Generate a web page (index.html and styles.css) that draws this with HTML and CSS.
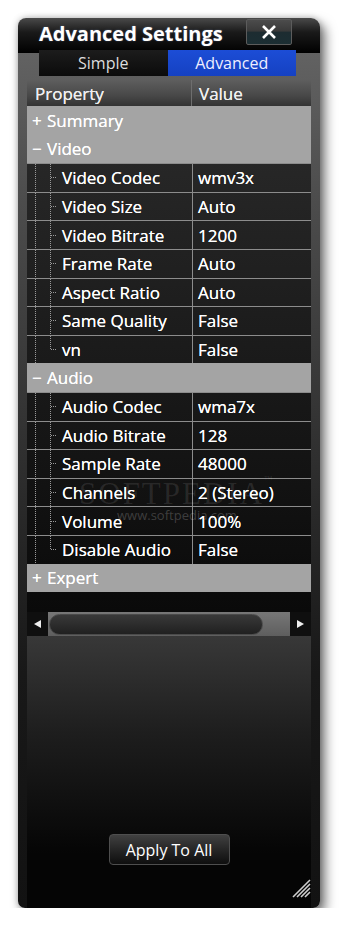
FILE: index.html
```html
<!DOCTYPE html>
<html>
<head>
	<meta charset="utf-8">
	<title>Advanced Settings</title>
	<link rel="stylesheet" href="styles.css">
</head>
<body>
	<div class="window">
		<div class="titlebar">
			<span class="titlebar__txt">Advanced Settings</span>
			<span class="close">
				<svg width="16" height="14" viewBox="0 0 16 14"><path d="M2 1 L14 13 M14 1 L2 13" stroke="#fff" stroke-width="2.6" fill="none"/></svg>
			</span>
		</div>

		<div class="body">
			<div class="tabs">
				<span class="tab">Simple</span>
				<span class="tab tab_active">Advanced</span>
			</div>

			<div class="grid">
				<div class="grid__head">
					<span class="grid__hname">Property</span>
					<span class="grid__hval">Value</span>
				</div>

				<div class="grid__cat"><span class="grid__sign">+</span>Summary</div>
				<div class="grid__cat"><span class="grid__sign">&minus;</span>Video</div>
				<div class="grid__row"><span class="grid__name">Video Codec</span><span class="grid__val">wmv3x</span></div>
				<div class="grid__row"><span class="grid__name">Video Size</span><span class="grid__val">Auto</span></div>
				<div class="grid__row"><span class="grid__name">Video Bitrate</span><span class="grid__val">1200</span></div>
				<div class="grid__row"><span class="grid__name">Frame Rate</span><span class="grid__val">Auto</span></div>
				<div class="grid__row"><span class="grid__name">Aspect Ratio</span><span class="grid__val">Auto</span></div>
				<div class="grid__row"><span class="grid__name">Same Quality</span><span class="grid__val">False</span></div>
				<div class="grid__row grid__row_last"><span class="grid__name">vn</span><span class="grid__val">False</span></div>

				<div class="grid__cat"><span class="grid__sign">&minus;</span>Audio</div>
				<div class="grid__row"><span class="grid__name">Audio Codec</span><span class="grid__val">wma7x</span></div>
				<div class="grid__row"><span class="grid__name">Audio Bitrate</span><span class="grid__val">128</span></div>
				<div class="grid__row"><span class="grid__name">Sample Rate</span><span class="grid__val">48000</span></div>
				<div class="grid__row"><span class="grid__name">Channels</span><span class="grid__val">2 (Stereo)</span></div>
				<div class="grid__row"><span class="grid__name">Volume</span><span class="grid__val">100%</span></div>
				<div class="grid__row grid__row_last"><span class="grid__name">Disable Audio</span><span class="grid__val">False</span></div>

				<div class="grid__cat"><span class="grid__sign">+</span>Expert</div>

				<div class="watermark">
					<div class="watermark__big">SOFTPEDIA<sup>™</sup></div>
					<div class="watermark__url">www.softpedia.com</div>
				</div>
			</div>

			<div class="scroll">
				<span class="scroll__btn">
					<svg width="7" height="8" viewBox="0 0 7 8"><path d="M7 0 L0 4 L7 8 Z" fill="#eee"/></svg>
				</span>
				<span class="scroll__thumb"></span>
				<span class="scroll__track"></span>
				<span class="scroll__btn">
					<svg width="7" height="8" viewBox="0 0 7 8"><path d="M0 0 L7 4 L0 8 Z" fill="#eee"/></svg>
				</span>
			</div>

			<div class="footer">
				<span class="apply">Apply To All</span>
				<svg class="grip" width="19" height="19" viewBox="0 0 19 19">
					<path d="M1 18 L18 1 M5 18 L18 5 M9 18 L18 9 M13 18 L18 13" stroke="#cfcfcf" stroke-width="1.6" fill="none"/>
				</svg>
			</div>
		</div>
	</div>
</body>
</html>
```

FILE: styles.css
```css
body {
	margin: 0;
	background: #fff;
	font-family: "Open Sans", "Noto Sans", sans-serif;
}


.window {
	width: 302px;
	height: 890px;
	margin: 18px 0 0 18px;
	display: flex;
	flex-direction: column;
	overflow: hidden;
	border-radius: 8px 9px 7px 7px;
	box-shadow: 5px 6px 12px rgba(0,0,0,.55), 0 0 6px rgba(0,0,0,.25);
}

.titlebar {
	height: 35px;
	display: flex;
	align-items: center;
	justify-content: space-between;
	padding: 0 28px 0 21px;
	background: linear-gradient(#4a4a4a, #1a1a1a 40%, #000);
	flex-shrink: 0;
}
	.titlebar__txt {
		color: #fff;
		font-size: 20px;
		font-weight: 700;
		margin-top: -4px;
		text-shadow: 0 0 2px rgba(160,190,255,.35);
	}

	.close {
		width: 44px;
		height: 24px;
		margin-top: -8px;
		display: flex;
		align-items: center;
		justify-content: center;
		border: 1px solid #5c5c5c;
		border-radius: 2px;
		background: linear-gradient(#4c4c4c, #3a3a3a 45%, #1d2c31 52%, #1b2e33);
	}


.body {
	flex: 1;
	display: flex;
	flex-direction: column;
	padding: 0 9px;
	background: linear-gradient(#626262, #4c4c4c 150px, #2a2a2a 450px, #181818 620px, #121212);
}

.tabs {
	display: flex;
	height: 26px;
	margin: -3px 15px 4px 12px;
}
	.tab {
		flex: 1;
		display: flex;
		align-items: center;
		justify-content: center;
		color: #ddd;
		font-size: 16px;
		background: linear-gradient(#1c1c1c, #0b0b0b);
	}
	.tab_active {
		color: #eef;
		background: linear-gradient(#1c4dd6, #1541c2);
	}


.grid {
	position: relative;
	padding-bottom: 20px;
	background: linear-gradient(#2c2c2c, #0a0a0a);
	font-size: 17px;
	color: #fff;
	text-shadow: 0 0 .4px #fff;
}
	.grid__head {
		display: flex;
		height: 26px;
		align-items: center;
		color: #eee;
		background: linear-gradient(#5e5e5e, #484848 60%, #333);
	}
		.grid__hname {
			width: 165px;
			height: 100%;
			display: flex;
			align-items: center;
			padding-left: 8px;
			box-sizing: border-box;
			border-right: 1px solid #6e6e6e;
		}
		.grid__hval {
			padding-left: 7px;
		}

	.grid__cat {
		height: 28.6px;
		display: flex;
		align-items: center;
		padding-left: 5px;
		background: #a4a4a4;
	}
		.grid__sign {
			width: 15px;
		}

	.grid__row {
		display: flex;
		height: 28.6px;
		box-sizing: border-box;
		border-top: 1px solid #8c8c8c;
	}
		.grid__name {
			width: 165px;
			flex-shrink: 0;
			display: flex;
			align-items: center;
			padding-left: 35px;
			box-sizing: border-box;
			background:
				repeating-linear-gradient(to right, #9a9a9a 0 1px, transparent 1px 2px) 24px 50% / 6px 1px no-repeat,
				repeating-linear-gradient(#9a9a9a 0 1px, transparent 1px 2px) 23px 0 / 1px 100% no-repeat,
				repeating-linear-gradient(#9a9a9a 0 1px, transparent 1px 2px) 8px 0 / 1px 100% no-repeat;
		}
		.grid__row_last .grid__name {
			background-size: 6px 1px, 1px 50%, 1px 100%;
		}
		.grid__val {
			flex: 1;
			display: flex;
			align-items: center;
			padding-left: 5px;
			border-left: 1px solid #8c8c8c;
		}

	.watermark {
		position: absolute;
		left: 52px;
		top: 394px;
		text-align: center;
		pointer-events: none;
		text-shadow: none;
	}
		.watermark__big {
			font-family: "Liberation Serif", serif;
			font-size: 31px;
			letter-spacing: 2px;
			color: rgba(255,255,255,.1);
		}
			.watermark__big sup {
				font-size: 9px;
				vertical-align: 22px;
			}
		.watermark__url {
			margin-top: -6px;
			font-size: 13px;
			color: rgba(255,255,255,.2);
		}


.scroll {
	display: flex;
	height: 24px;
	flex-shrink: 0;
	background: linear-gradient(#777, #5e5e5e);
}
	.scroll__btn {
		width: 21px;
		display: flex;
		align-items: center;
		justify-content: center;
		background: #0f0f0f;
	}
	.scroll__thumb {
		width: 212px;
		margin: 2px 0 1px 1px;
		border: 1px solid #4a4a4a;
		border-radius: 11px;
		background: linear-gradient(#393939, #202020);
	}
	.scroll__track {
		flex: 1;
	}


.footer {
	flex: 1;
	display: flex;
	flex-direction: column;
	align-items: center;
	justify-content: flex-end;
	padding-bottom: 10px;
	background: linear-gradient(#383838, #1e1e1e 35%, #050505 80%);
}
	.apply {
		width: 121px;
		height: 31px;
		box-sizing: border-box;
		display: flex;
		align-items: center;
		justify-content: center;
		margin-bottom: 14px;
		border: 1px solid #4e4e4e;
		border-radius: 4px;
		color: #fff;
		font-size: 16px;
		background: linear-gradient(#404040, #262626 50%, #0e0e0e);
	}
	.grip {
		align-self: flex-end;
	}
```
